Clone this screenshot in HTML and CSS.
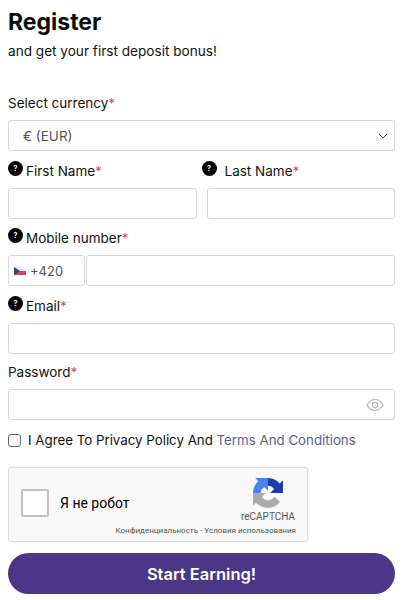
FILE: index.html
```html
<!DOCTYPE html>
<html lang="en">
<head>
    <meta charset="UTF-8">
    <meta name="viewport" content="width=device-width, initial-scale=1.0">
    <title>Register</title>
    <link rel="stylesheet" href="styles.css">
</head>
<body>
    <form class="register">
        <h1>Register</h1>
        <p class="subtitle">and get your first deposit bonus!</p>

        <label class="label label-currency">Select currency<span class="req">*</span></label>
        <div class="field select-field">
            <span>€ (EUR)</span>
            <svg class="chevron" width="10" height="6" viewBox="0 0 10 6"><path d="M1 1l4 4 4-4" fill="none" stroke="#555" stroke-width="1"/></svg>
        </div>

        <div class="name-row">
            <div class="name-col">
                <label class="label"><span class="help">?</span>First Name<span class="req">*</span></label>
                <div class="field"></div>
            </div>
            <div class="name-col">
                <label class="label"><span class="help help-wide">?</span>Last Name<span class="req">*</span></label>
                <div class="field"></div>
            </div>
        </div>

        <label class="label label-mobile"><span class="help">?</span>Mobile number<span class="req">*</span></label>
        <div class="phone-row">
            <div class="field phone-code">
                <svg class="flag" width="12" height="8" viewBox="0 0 12 8">
                    <rect width="12" height="4" fill="#eeeef2"/>
                    <rect y="4" width="12" height="4" fill="#d7434f"/>
                    <path d="M0 0l6 4-6 4z" fill="#2b4a7d"/>
                </svg>
                <span>+420</span>
            </div>
            <div class="field phone-number"></div>
        </div>

        <label class="label"><span class="help">?</span>Email<span class="req">*</span></label>
        <div class="field"></div>

        <label class="label label-password">Password<span class="req">*</span></label>
        <div class="field password-field">
            <svg width="18" height="14" viewBox="0 0 18 14">
                <path d="M1 7c2-3.600 4.800-5.500 8-5.500S15 3.400 17 7c-2 3.600-4.800 5.500-8 5.500S3 10.600 1 7z" fill="none" stroke="#b4b4b4" stroke-width="1.200"/>
                <circle cx="9" cy="7" r="2.700" fill="none" stroke="#b4b4b4" stroke-width="1.200"/>
            </svg>
        </div>

        <div class="agree">
            <span class="checkbox"></span>
            <span>I Agree To Privacy Policy And <a class="terms">Terms And Conditions</a></span>
        </div>

        <div class="captcha">
            <span class="captcha-box"></span>
            <span class="captcha-text">Я не робот</span>
            <div class="captcha-brand">
                <svg width="30" height="30" viewBox="0 0 64 64">
                    <path d="M64 31.955l-.033-1.370V4.687l-7.160 7.160C50.948 4.674 42.033.093 32.050.093c-10.400 0-19.622 4.960-25.458 12.640l11.736 11.860a15.550 15.550 0 0 1 4.754-5.334c2.050-1.600 4.952-2.906 8.968-2.906.485 0 .860.057 1.135.163 4.976.393 9.288 3.140 11.828 7.124l-8.307 8.307c10.522-.040 22.400-.066 27.830.017" fill="#1c3aa9"/>
                    <path d="M31.862.094l-1.370.033H4.594l7.160 7.160C4.580 13.147 0 22.060 0 32.046c0 10.400 4.960 19.622 12.640 25.458l11.860-11.736a15.550 15.550 0 0 1-5.334-4.754c-1.600-2.050-2.906-4.952-2.906-8.968 0-.485.057-.860.163-1.135.393-4.976 3.140-9.288 7.124-11.828l8.307 8.307c-.040-10.522-.066-22.400.017-27.830" fill="#4285f4"/>
                    <path d="M.001 32.045l.033 1.370v25.898l7.160-7.160c5.860 7.173 14.774 11.754 24.760 11.754 10.400 0 19.622-4.960 25.458-12.640l-11.736-11.860a15.550 15.550 0 0 1-4.754 5.334c-2.050 1.600-4.952 2.906-8.968 2.906-.485 0-.860-.057-1.135-.163-4.976-.393-9.288-3.140-11.828-7.124l8.307-8.307c-10.522.040-22.400.066-27.830-.017" fill="#ababab"/>
                </svg>
                <span class="captcha-name">reCAPTCHA</span>
            </div>
            <span class="captcha-links">Конфиденциальность - Условия использования</span>
        </div>

        <button type="button" class="submit">Start Earning!</button>
    </form>
</body>
</html>
```

FILE: styles.css
```css
* {
    box-sizing: border-box;
}

body {
    font-family: Inter, "Noto Sans", sans-serif;
    margin: 0;
    padding: 0 14px 0 8px;
    background: #fff;
    color: #111;
}

.register {
    display: flex;
    flex-direction: column;
    height: 600px;
    overflow: hidden;
}

h1 {
    font-size: 23px;
    line-height: 30px;
    font-weight: 700;
    margin: 7px 0 0;
    color: #0a0a0a;
}

.subtitle {
    font-size: 13.600px;
    line-height: 20px;
    margin: 4px 0 0;
}

.label {
    display: flex;
    align-items: center;
    font-size: 13.500px;
    line-height: 20px;
    height: 20px;
    margin-top: 10px;
    margin-bottom: 7px;
    white-space: nowrap;
}

.label-currency {
    margin-top: 32px;
}

.label-mobile {
    margin-top: 9px;
}

.label-password {
    margin-top: 8px;
}

.req {
    color: #d9467f;
}

.help {
    width: 15px;
    height: 15px;
    flex: none;
    margin: -5px 3px 0 0;
    border-radius: 50%;
    background: #000;
    color: #fff;
    font-size: 7px;
    font-weight: 700;
    line-height: 15px;
    text-align: center;
}

.help-wide {
    margin-left: -5px;
    margin-right: 8px;
}

.field {
    height: 31px;
    border: 1px solid #d8d8d8;
    border-radius: 3px;
    background: #fff;
}

.select-field {
    display: flex;
    align-items: center;
    justify-content: space-between;
    padding: 0 6px 0 14px;
    font-size: 13.500px;
    color: #555;
}

.name-row {
    display: flex;
    gap: 10px;
}

.name-col {
    flex: 1;
}

.phone-row {
    display: flex;
}

.phone-code {
    display: flex;
    align-items: center;
    gap: 4px;
    width: 77px;
    padding-left: 5px;
    font-size: 13px;
    color: #555;
}

.phone-number {
    flex: 1;
    margin-left: 1px;
}

.password-field {
    display: flex;
    align-items: center;
    justify-content: flex-end;
    padding-right: 10px;
}

.agree {
    display: flex;
    align-items: center;
    gap: 7px;
    margin-top: 10px;
    height: 20px;
    font-size: 13.300px;
    white-space: nowrap;
}

.checkbox {
    width: 13px;
    height: 13px;
    flex: none;
    border: 1px solid #666;
    border-radius: 3px;
}

.terms {
    color: #5d6287;
}

.captcha {
    position: relative;
    width: 300px;
    height: 75px;
    flex: none;
    margin-top: 17px;
    border: 1px solid #dcdcdc;
    border-radius: 3px;
    background: #f9f9f9;
    box-shadow: 0 0 3px rgba(0, 0, 0, 0.1);
    font-family: Roboto, sans-serif;
}

.captcha-box {
    position: absolute;
    left: 12px;
    top: 21px;
    width: 28px;
    height: 28px;
    border: 2px solid #c1c1c1;
    border-radius: 2px;
    background: #fff;
}

.captcha-text {
    position: absolute;
    left: 51px;
    top: 27px;
    font-size: 14px;
    line-height: 16px;
    color: #000;
}

.captcha-brand {
    position: absolute;
    right: 12px;
    top: 10px;
    display: flex;
    flex-direction: column;
    align-items: center;
    gap: 3px;
}

.captcha-name {
    font-size: 10px;
    line-height: 12px;
    color: #555;
}

.captcha-links {
    position: absolute;
    right: 11px;
    bottom: 5px;
    font-size: 8px;
    line-height: 10px;
    color: #555;
    white-space: nowrap;
}

.submit {
    height: 41px;
    flex: none;
    margin-top: 11px;
    border: none;
    border-radius: 21px;
    background: #4a3786;
    color: #fff;
    font-family: inherit;
    font-size: 16.500px;
    font-weight: 600;
}
```
